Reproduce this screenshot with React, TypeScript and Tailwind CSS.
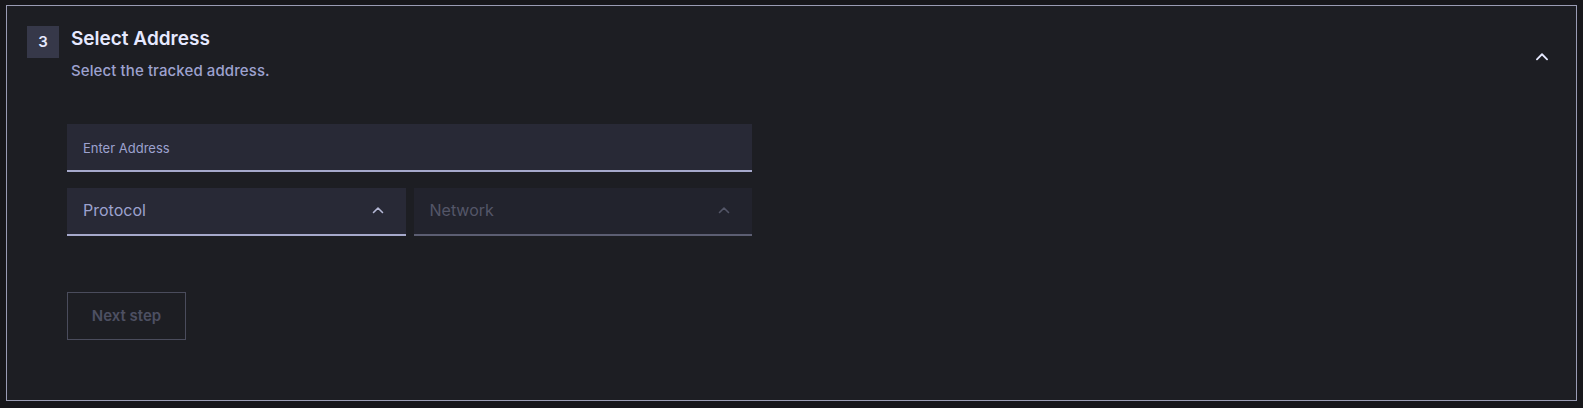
import React from "react";

const Chevron = ({ className }: { className?: string }) => (
  <svg viewBox="0 0 12 8" className={className} fill="none" stroke="currentColor" strokeWidth="1.6" strokeLinecap="round" strokeLinejoin="round">
    <path d="M1.5 6.5 L6 2 L10.5 6.5" />
  </svg>
);

export default function App() {
  return (
    <div className="w-[1583px] h-[408px] bg-[#17171b] pt-[5px] pl-[6px]" style={{ fontFamily: "Inter, 'Noto Sans', sans-serif" }}>
      <div className="w-[1571px] h-[396px] border border-[#9a9cb4] bg-[#1d1e23] flex">
        <div className="flex-1 pl-[20px] pt-[20px]">
          <div className="flex">
            <div className="w-[32px] h-[32px] bg-[#363849] text-[#e6e9ff] text-[15px] font-semibold flex items-center justify-center">3</div>
            <div className="ml-[12px] pt-[2px]">
              <div className="text-[19px] leading-[22px] font-semibold text-[#e6e9ff]">Select Address</div>
              <div className="mt-[11px] text-[15px] leading-[20px] font-medium tracking-[0.1px] text-[#9da2cf]">Select the tracked address.</div>
            </div>
          </div>
          <div className="ml-[40px] mt-[43px] w-[685px]">
            <div className="h-[48px] bg-[#282936] border-b-2 border-[#a6a9cb] flex items-center px-[16px] pt-[3px]">
              <span className="text-[13px] text-[#9da2cf]">Enter Address</span>
            </div>
            <div className="mt-[16px] flex gap-[8px]">
              <div className="flex-1 h-[48px] bg-[#282936] border-b-2 border-[#a6a9cb] flex items-center justify-between px-[16px] pb-[3px]">
                <span className="text-[16px] text-[#9da2cf]">Protocol</span>
                <Chevron className="w-[12px] h-[8px] text-[#b5b8d6] mr-[6px]" />
              </div>
              <div className="flex-1 h-[48px] bg-[#22232d] border-b-2 border-[#5c5e72] flex items-center justify-between px-[16px] pb-[3px]">
                <span className="text-[16px] text-[#545668]">Network</span>
                <Chevron className="w-[12px] h-[8px] text-[#545668] mr-[6px]" />
              </div>
            </div>
            <button className="mt-[56px] w-[119px] h-[48px] border border-[#4a4c5c] text-[15px] font-semibold text-[#4d5062] flex items-center justify-center">
              Next step
            </button>
          </div>
        </div>
        <div className="pr-[27px] pt-[46px]">
          <Chevron className="w-[14px] h-[9px] text-[#e6e9ff]" />
        </div>
      </div>
    </div>
  );
}
